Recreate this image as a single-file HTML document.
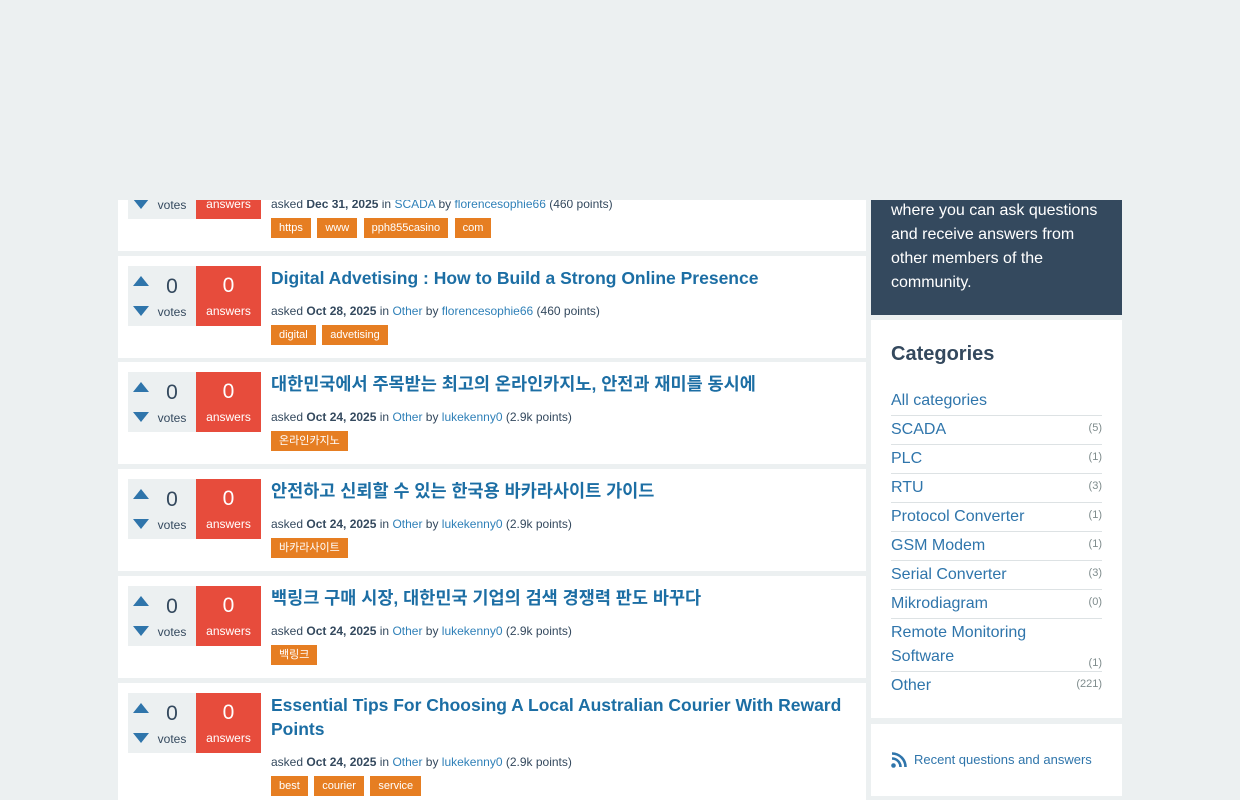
<!DOCTYPE html>
<html style="width:1240px;height:800px;overflow:hidden"><head><meta charset="utf-8"><style>
*{box-sizing:border-box;margin:0;padding:0}
body{width:1240px;height:800px;overflow:hidden;background:#ecf0f1;font-family:"Liberation Sans","Noto Sans CJK KR",sans-serif;position:relative}
.item{position:absolute;left:118px;width:748px;height:102px;background:#fff}
.vote{position:absolute;left:10px;top:10px;width:68px;height:60px;background:#ecf0f1}
.up,.dn{position:absolute;left:5px;width:0;height:0;border-left:8px solid transparent;border-right:8px solid transparent}
.up{top:10px;border-bottom:10px solid #2f75ab}
.dn{top:40px;border-top:10px solid #2f75ab}
.vn{position:absolute;left:32px;top:9px;width:24px;text-align:center;font-size:21px;color:#34495e}
.vl{position:absolute;left:28px;top:39px;width:32px;text-align:center;font-size:12px;color:#34495e}
.ans{position:absolute;left:78px;top:10px;width:65px;height:60px;background:#e74c3c;color:#fff;text-align:center}
.ans b{display:block;font-weight:normal;font-size:21px;margin-top:8px;height:28px}
.ans span{font-size:12px}
.t{position:absolute;left:153px;top:10px;width:590px;font-size:17.5px;font-weight:bold;color:#1c6ea4;line-height:24px}
.m{position:absolute;left:153px;top:48px;font-size:12px;color:#34495e;white-space:nowrap}
.m a{color:#2f80b8}
.tags{position:absolute;left:153px;top:69px}
.tags span{display:inline-block;background:#e67e22;color:#fff;font-size:11px;height:20px;line-height:20px;padding:0 8px;margin-right:2px}
.side{position:absolute;left:871px;width:251px;background:#fff}
.cat{position:absolute;left:20px;width:211px;font-size:16px;color:#2f75ab;border-bottom:1px solid #dde2e4;line-height:24px;padding:2px 0}
.cat i{position:absolute;right:0;top:0;font-style:normal;font-size:11px;color:#7f8c8d}
</style></head><body>

<div class="item" style="top:149px"><div class="vote"><div class="up"></div><div class="dn"></div><div class="vn">0</div><div class="vl">votes</div></div><div class="ans"><b>0</b><span>answers</span></div><div class="t">Title</div><div class="m">asked <b>Dec 31, 2025</b> in <a>SCADA</a> by <a>florencesophie66</a> (460 points)</div><div class="tags"><span>https</span> <span>www</span> <span>pph855casino</span> <span>com</span></div></div>

<div class="item" style="top:256px"><div class="vote"><div class="up"></div><div class="dn"></div><div class="vn">0</div><div class="vl">votes</div></div><div class="ans"><b>0</b><span>answers</span></div><div class="t">Digital Advetising : How to Build a Strong Online Presence</div><div class="m">asked <b>Oct 28, 2025</b> in <a>Other</a> by <a>florencesophie66</a> (460 points)</div><div class="tags"><span>digital</span> <span>advetising</span></div></div>

<div class="item" style="top:362px"><div class="vote"><div class="up"></div><div class="dn"></div><div class="vn">0</div><div class="vl">votes</div></div><div class="ans"><b>0</b><span>answers</span></div><div class="t">대한민국에서 주목받는 최고의 온라인카지노, 안전과 재미를 동시에</div><div class="m">asked <b>Oct 24, 2025</b> in <a>Other</a> by <a>lukekenny0</a> (2.9k points)</div><div class="tags"><span>온라인카지노</span></div></div>

<div class="item" style="top:469px"><div class="vote"><div class="up"></div><div class="dn"></div><div class="vn">0</div><div class="vl">votes</div></div><div class="ans"><b>0</b><span>answers</span></div><div class="t">안전하고 신뢰할 수 있는 한국용 바카라사이트 가이드</div><div class="m">asked <b>Oct 24, 2025</b> in <a>Other</a> by <a>lukekenny0</a> (2.9k points)</div><div class="tags"><span>바카라사이트</span></div></div>

<div class="item" style="top:576px"><div class="vote"><div class="up"></div><div class="dn"></div><div class="vn">0</div><div class="vl">votes</div></div><div class="ans"><b>0</b><span>answers</span></div><div class="t">백링크 구매 시장, 대한민국 기업의 검색 경쟁력 판도 바꾸다</div><div class="m">asked <b>Oct 24, 2025</b> in <a>Other</a> by <a>lukekenny0</a> (2.9k points)</div><div class="tags"><span>백링크</span></div></div>

<div class="item" style="top:683px;height:117px"><div class="vote"><div class="up"></div><div class="dn"></div><div class="vn">0</div><div class="vl">votes</div></div><div class="ans"><b>0</b><span>answers</span></div><div class="t">Essential Tips For Choosing A Local Australian Courier With Reward Points</div><div class="m" style="top:72px">asked <b>Oct 24, 2025</b> in <a>Other</a> by <a>lukekenny0</a> (2.9k points)</div><div class="tags" style="top:93px"><span>best</span> <span>courier</span> <span>service</span></div></div>

<div class="side" style="top:100px;height:215px;background:#34495e;color:#fff;font-size:16px;line-height:24px;padding:99px 20px 0 20px">where you can ask questions and receive answers from other members of the community.</div>

<div class="side" style="top:320px;height:398px">
<div style="position:absolute;left:20px;top:23px;font-size:20px;font-weight:bold;color:#34495e">Categories</div>
<div class="cat" style="top:67px">All categories</div>
<div class="cat" style="top:96px">SCADA<i>(5)</i></div>
<div class="cat" style="top:125px">PLC<i>(1)</i></div>
<div class="cat" style="top:154px">RTU<i>(3)</i></div>
<div class="cat" style="top:183px">Protocol Converter<i>(1)</i></div>
<div class="cat" style="top:212px">GSM Modem<i>(1)</i></div>
<div class="cat" style="top:241px">Serial Converter<i>(3)</i></div>
<div class="cat" style="top:270px">Mikrodiagram<i>(0)</i></div>
<div class="cat" style="top:299px">Remote Monitoring<br>Software<i style="top:32px">(1)</i></div>
<div class="cat" style="top:352px;border:none">Other<i>(221)</i></div>
</div>

<div class="side" style="top:724px;height:72px">
<svg style="position:absolute;left:20px;top:28px" width="16" height="16" viewBox="0 0 16 16"><circle cx="2.5" cy="13.5" r="2.3" fill="#2f75ab"/><path d="M1 6.5a8.5 8.5 0 0 1 8.5 8.5M1 1.5a13.5 13.5 0 0 1 13.5 13.5" stroke="#2f75ab" stroke-width="2.6" fill="none"/></svg>
<div style="position:absolute;left:43px;top:28px;font-size:13px;color:#2f75ab">Recent questions and answers</div>
</div>

<div style="position:absolute;left:0;top:0;width:1240px;height:200px;background:#ecf0f1"></div>
</body></html>
